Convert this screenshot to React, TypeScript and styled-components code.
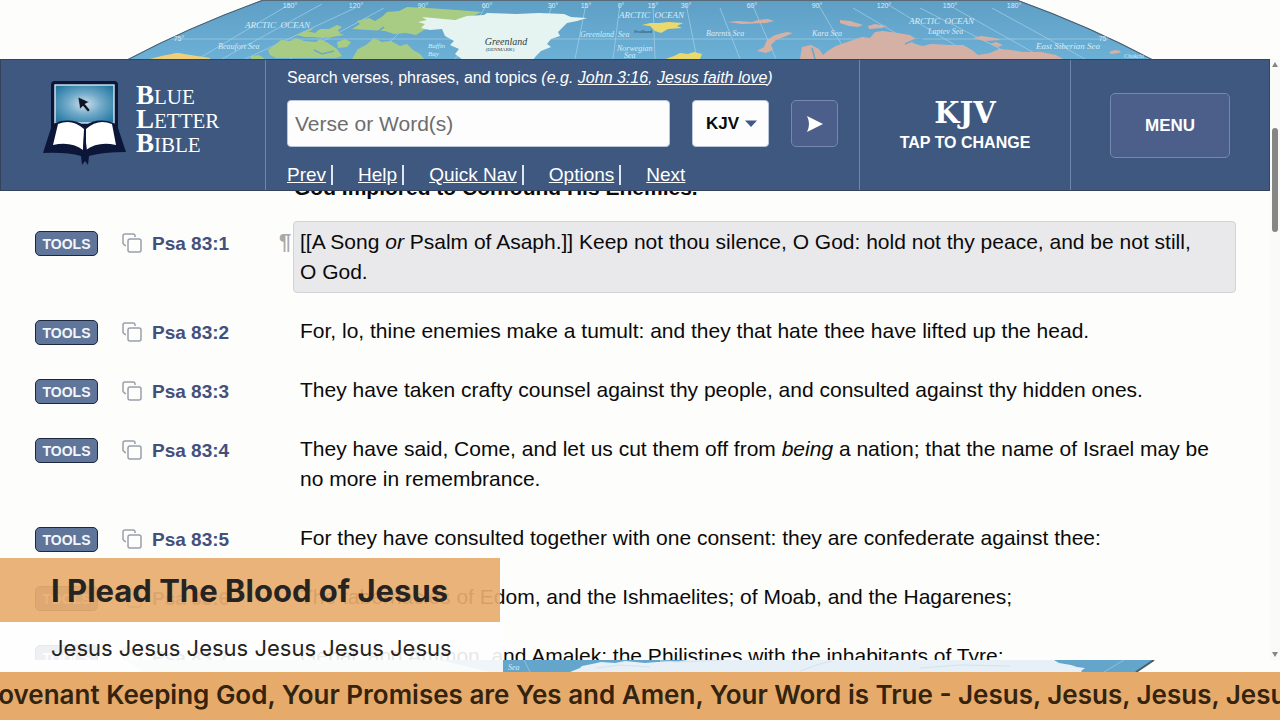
import React from "react";
import styled, { createGlobalStyle } from "styled-components";

const sans = '"Liberation Sans", Arial, sans-serif';
const display = 'Inter, "Open Sans", sans-serif';
const navy = "#3e587f";
const rule = "#6f86ab";

const GlobalStyle = createGlobalStyle`
  *, *::before, *::after { box-sizing: border-box; }
  body { margin: 0; background: #fdfdfb; font-family: ${sans}; color: #0a0a0a; }
`;

const Stage = styled.div`
  position: relative;
  display: flex;
  flex-direction: column;
  height: 100vh;
  overflow: hidden;
`;

const MapStrip = styled.svg<{ $height: number }>`
  display: block;
  flex: none;
  width: 100%;
  height: ${(p) => p.$height}px;
`;

const Browser = styled.div`
  display: flex;
  flex: 1;
  min-height: 0;
`;

const Page = styled.div`
  display: flex;
  flex-direction: column;
  flex: 1;
  min-width: 0;
`;

const Header = styled.header`
  display: grid;
  grid-template-columns: 265px minmax(0, 1fr) 211px 198px;
  flex: none;
  height: 132px;
  background: ${navy};
  border: 1px solid #34425c;
  color: #fff;
`;

const Brand = styled.a`
  display: flex;
  align-items: center;
  gap: 10px;
  padding: 0 0 4px 41px;
  border-right: 1px solid ${rule};
  color: #fff;
  text-decoration: none;
`;

const BrandName = styled.span`
  display: flex;
  flex-direction: column;
  padding-bottom: 4px;
  font: 21px/23px "Liberation Serif", serif;
`;

const Initial = styled.span`
  font-size: 27px;
  font-weight: bold;
  line-height: 20px;
`;

const Search = styled.form`
  display: flex;
  flex-direction: column;
  padding: 8px 21px 0;
  border-right: 1px solid ${rule};
`;

const SearchLabel = styled.label`
  font-size: 16px;
  line-height: 20px;
  a { color: inherit; }
`;

const Fields = styled.div`
  display: flex;
  gap: 22px;
  margin-top: 12px;
`;

const Query = styled.input`
  flex: 1;
  min-width: 0;
  height: 47px;
  padding: 0 7px;
  border: 1px solid #b9c6dc;
  border-radius: 4px;
  background: #fdfdfd;
  font: 21px ${sans};
  &::placeholder { color: #6d6d6d; opacity: 1; }
`;

const Version = styled.div`
  position: relative;
  svg { position: absolute; right: 12px; top: 20px; pointer-events: none; }
`;

const VersionSelect = styled.select`
  width: 77px;
  height: 47px;
  padding: 0 0 0 13px;
  border: 1px solid #b9c6dc;
  border-radius: 4px;
  background: #fdfdfd;
  color: #0a0a0a;
  appearance: none;
  font: bold 17px ${sans};
`;

const SoftButton = styled.button<{ $w: number; $h: number }>`
  display: flex;
  align-items: center;
  justify-content: center;
  width: ${(p) => p.$w}px;
  height: ${(p) => p.$h}px;
  padding: 1px 0 0;
  border: 1px solid #7488b0;
  border-radius: 5px;
  background: #4c5f8a;
  color: #fff;
  font: bold 17px ${sans};
`;

const Links = styled.nav`
  display: flex;
  gap: 25px;
  margin-top: 18px;
  font-size: 19px;
  line-height: 20px;
`;

const LinkItem = styled.span`
  padding-right: 5px;
  border-right: 2px solid #dfe6f2;
  &:last-child { border: 0; }
  a { color: #fff; }
`;

const ChangeVersion = styled.button`
  display: flex;
  flex-direction: column;
  align-items: center;
  justify-content: center;
  padding: 0;
  border: 0;
  border-right: 1px solid ${rule};
  background: none;
  color: #fff;
  font: bold 16px/24px ${sans};
`;

const VersionName = styled.span`
  font: bold 29px/36px "DejaVu Serif", serif;
`;

const MenuCell = styled.div`
  display: flex;
  align-items: center;
  justify-content: center;
`;

const Passage = styled.main`
  flex: 1;
  min-height: 0;
  overflow: hidden;
  padding: 0 34px 0 35px;
`;

const Heading = styled.h2`
  margin: -18px 0 18px 259px;
  font-size: 21px;
  line-height: 30px;
`;

const Verses = styled.ol`
  display: flex;
  flex-direction: column;
  gap: 17px;
  margin: 0;
  padding: 0;
  list-style: none;
`;

const Verse = styled.li`
  display: grid;
  grid-template-columns: 87px 30px 127px 14px minmax(0, 1fr);
  align-items: start;
`;

const Tools = styled.button`
  width: 63px;
  height: 25px;
  margin-top: 10px;
  padding: 0;
  border: 1px solid #1d2840;
  border-radius: 5px;
  background: #5f7599;
  color: #f4f6fa;
  font: bold 14px ${sans};
`;

const Copy = styled.button`
  display: flex;
  width: 20px;
  margin-top: 12px;
  padding: 0;
  border: 0;
  background: none;
`;

const Reference = styled.a`
  margin-top: 10px;
  color: #43507c;
  font-size: 19px;
  font-weight: bold;
  line-height: 26px;
  text-decoration: none;
`;

const Pilcrow = styled.span`
  margin-top: 6px;
  color: #a8a8a8;
  font-size: 22px;
  font-weight: bold;
  line-height: 30px;
`;

const VerseText = styled.p<{ $active?: boolean }>`
  margin: 0;
  padding: 5px 6px;
  border: 1px solid ${(p) => (p.$active ? "#d2d3d6" : "transparent")};
  border-radius: 4px;
  background: ${(p) => (p.$active ? "#e9e9eb" : "transparent")};
  font-size: 21px;
  line-height: 30px;
`;

const Scrollbar = styled.div`
  display: flex;
  flex-direction: column;
  align-items: center;
  width: 10px;
  padding: 3px 0;
  background: #fafaf9;
`;

const Track = styled.div`
  flex: 1;
  width: 6px;
  padding-top: 61px;
`;

const Thumb = styled.div`
  height: 104px;
  border-radius: 3px;
  background: #868686;
`;

const LowerThird = styled.section`
  position: absolute;
  left: 0;
  bottom: 48px;
  font-family: ${display};
  color: #262422;
`;

const Title = styled.h1`
  width: 500px;
  margin: 0;
  padding: 2px 0 0 51px;
  background: rgba(232, 173, 110, 0.92);
  font-size: 31px;
  font-weight: 700;
  line-height: 62px;
  white-space: nowrap;
`;

const Subtitle = styled.p`
  width: 503px;
  margin: 0;
  padding: 2px 0 0 51px;
  background: rgba(254, 254, 254, 0.9);
  font-size: 22px;
  font-weight: 400;
  line-height: 48px;
  white-space: nowrap;
`;

const Ticker = styled.footer`
  flex: none;
  overflow: hidden;
  background: #e6ab6b;
  color: #33230f;
  font: 600 26px/46px ${display};
  height: 48px;
  white-space: nowrap;
`;

const TickerText = styled.p`
  margin: 0 0 0 -21px;
`;

const NorthMap = () => (
  <MapStrip $height={59} viewBox="0 0 1280 59" role="img" aria-label="World map, Arctic">
    <defs>
      <clipPath id="globe">
        <path d="M128 59 Q190 26 262 0 H1018 Q1090 26 1152 59 Z" />
      </clipPath>
      <linearGradient id="sea" x1="0" y1="0" x2="0" y2="1">
        <stop offset="0" stopColor="#5f9fc6" />
        <stop offset="1" stopColor="#6cb0d6" />
      </linearGradient>
    </defs>
    <g clipPath="url(#globe)">
      <rect width="1280" height="59" fill="url(#sea)" />
      <g fill="none" stroke="#9dcbe4" strokeWidth="0.8">
        <path d="M170 39H1110M290 4 198 59M322 4 222 59M355 8 245 59M384 8 290 59M425 8 372 59M487 4 455 59M553 4 530 59M586 4 575 59M620 4 613 59M653 4 655 59M686 4 697 59M720 8 740 59M752 4 776 59M818 4 850 59M853 8 940 59M887 4 978 59M920 8 1020 59M954 8 1045 59M992 8 1085 59" />
      </g>
      <path d="M150 59q14-4 22-5 5-2 12 0l26 4v2z" fill="#f0cf7c" />
      <g fill="#a9cc84">
        <path d="M268 50l8-6 5-4 9 1 6-3 8 3 12 1 4-3 8 4 9 6 5 7-6 2h-60l-6-3z" />
        <path d="M296 35l10-4 9 2 5-4 9 0 8-4 5 2-6 5 8 3-12 2-9 1-10-1-8 0z" />
        <path d="M352 29l8-5-3-3 12-3 6 3 8-5 4-4 12-1 8-4 20 1 30 2 25 2-12 5-22 4-12 6-12 3-8 5-10-2-12 1-9-3z" />
        <path d="M380 21l10-4 9 2 9-3 14 3-10 5-8 2-4 4-10-3-10 1zM352 59l6-10 8-4 8-7 8 4 9-1 9 5 7-2 6 6 7 4 5 6z" />
        <path d="M337 42l8-3 6 3-4 5-9 1zM331 30l6-1 3 4-6 1zM251 56l8-1 6 4h-14zM300 33l10-2 4-3" />
      </g>
      <path d="M455 20l12-4 17-1 3-2 30 1 22-1 25 1 7 3 16 1-10 3-10 2-4 4-5 5 2 4-9 3-4 5 4 3-10 4-5 5-3 4h-70l-8-6 4-5-9-4 4-4-9-5-3-7-12 1-9-2 4-4-7-2 9-2-5-3z" fill="#e5f4f1" />
      <g fill="#ead96d">
        <path d="M642 25l8-2 9 0 10-1 14 1-6 3 5 2-14 1-7 4-6-2-5-5zM666 59l8-3 6-3 8 1 6-2 8 2-2 5z" />
      </g>
      <g fill="#d5b1a5">
        <path d="M757 51l7-4 3-7 8-5 12-3 6 1-7 3-10 4-5 5 2 5-7 3zM728 22l10-1 14 1 6-2 10-1 6 2-8 2-24 1zM840 20l10 1 13 4-5 2-9-1-9-3z" />
        <path d="M800 59l2-12 9-2 8 4 4 6 6-5 7-4 14-5 12-4 8 1 5-6 8-1 15 2 12 2 6 4-5 4 12 3 8-2 20 1 12 0 9 5 6 5 12-2 9-4 12 1 12 2 18 0 15 3 7 4z" />
        <path d="M973 38l8-2 14 2 6 2-17 1zM868 26l7-2 12 2-5 2-13 1zM1109 52l6-2 6 1-2 2-8 1zM990 44l6-2 7 3-5 2z" />
      </g>
      <g fill="none" stroke="#6ca8c8" strokeWidth="1.6">
        <path d="M815 59l-3-11M905 44l9-4 9-1M350 40l10 8M362 34l14-1 8-6M314 50l8 4 12-3M500 59" />
      </g>
      <path d="M128 59 Q190 26 262 0M1018 0 Q1090 26 1152 59" fill="none" stroke="#4b5c69" strokeWidth="2" />
      <path d="M262 0.500H1018" stroke="#566a78" />
      <g fill="#d9ebf6" fontFamily="Liberation Serif, serif" fontStyle="italic" fontSize="8">
        <text x="245" y="28" fontSize="9">ARCTIC&#160; OCEAN</text>
        <text x="619" y="18" fontSize="9">ARCTIC&#160; OCEAN</text>
        <text x="909" y="24" fontSize="9">ARCTIC&#160; OCEAN</text>
        <text x="218" y="49">Beaufort Sea</text>
        <text x="580" y="37">Greenland&#160; Sea</text>
        <text x="617" y="51">Norwegian</text>
        <text x="624" y="58">Sea</text>
        <text x="706" y="36">Barents Sea</text>
        <text x="812" y="36">Kara Sea</text>
        <text x="928" y="34">Laptev Sea</text>
        <text x="1036" y="49" fontSize="9">East Siberian Sea</text>
        <text x="428" y="48" fontSize="7">Baffin</text>
        <text x="428" y="56" fontSize="7">Bay</text>
        <text x="1124" y="58" fontSize="6">Chukchi</text>
      </g>
      <g fill="#303c3c" fontFamily="Liberation Serif, serif" textAnchor="middle">
        <text x="506" y="45" fontSize="10" fontStyle="italic">Greenland</text>
        <text x="500" y="51" fontSize="5">(DENMARK)</text>
        <text x="643" y="33" fontSize="5">Svalbard</text>
      </g>
      <g fill="#d9ebf6" fontFamily="Liberation Sans, sans-serif" fontSize="7" textAnchor="middle">
        {[
          [290, "150°"], [356, "120°"], [423, "90°"], [487, "60°"], [553, "30°"], [586, "15°"],
          [621, "0°"], [653, "15°"], [686, "30°"], [752, "60°"], [817, "90°"], [884, "120°"],
          [950, "150°"], [1014, "180°"],
        ].map(([x, label]) => (
          <text key={x} x={x} y="8">{label}</text>
        ))}
        <text x="179" y="41">75°</text>
        <text x="1104" y="41">75°</text>
      </g>
    </g>
  </MapStrip>
);

const SouthMap = () => (
  <MapStrip $height={12} viewBox="0 0 1280 12" role="img" aria-label="World map, Antarctic">
    <path d="M126 0H1154L1136 12H144Z" fill="#64a5cb" />
    <path d="M144 12L126 0H440L490 12z" fill="#cfe3ec" />
    <path d="M570 12l10-4 2-2 10-2 9-2 14 1 10-2 20 2 12-1 18 0 12-2H1054l5 3 12 2 6 2 8 1-4 3 2 2z" fill="#e7f0f6" />
    <path d="M660 1l20 1 44-2M596 8l24-3 30 2M800 11l20-7 12-3M920 8l40-3 50 1" stroke="#d3e3ed" fill="none" />
    <path d="M524 0l6 12M1124 0l-20 12" stroke="#8fc0db" />
    <path d="M1154 0l-18 12" stroke="#4b5c69" strokeWidth="2" />
    <text x="508" y="10" fontSize="8" fontStyle="italic" fontFamily="Liberation Serif, serif" fill="#d9ebf6">Sea</text>
  </MapStrip>
);

const Logo = () => (
  <svg width="84" height="86" viewBox="0 0 84 86" aria-hidden="true">
    <defs>
      <radialGradient id="glow" cx="0.5" cy="0.5" r="0.65">
        <stop offset="0" stopColor="#cfe2ee" />
        <stop offset="0.45" stopColor="#6fa9c8" />
        <stop offset="1" stopColor="#1f75a0" />
      </radialGradient>
    </defs>
    <rect x="9" y="1" width="67" height="50" rx="4" fill="#0c1638" />
    <rect x="13" y="5" width="59" height="38" fill="url(#glow)" stroke="#d5e8f2" strokeWidth="1.400" />
    <path d="M9 48L1 73q24-1 38 3l1 9 3-4 3 4 1-9q14-4 37-4L76 48l-4-5q-17-6-29 3-14-9-30-3z" fill="#0c1638" />
    <path d="M16 44q14-6 26 5l-1 21q-12-9-30-5zM70 44q-14-6-26 5l0 21q12-9 30-5z" fill="#fff" />
    <path d="M42.500 49L41 71h4z" fill="#0c1638" />
    <path d="M36 17l2 12 3-3 5 6 2-2-5-6 4-2z" fill="#0d1428" stroke="#b9d2e2" strokeWidth="0.500" />
  </svg>
);

const CopyIcon = () => (
  <svg width="20" height="20" viewBox="0 0 20 20" fill="none" stroke="#9a9fac" strokeWidth="1.500" aria-hidden="true">
    <path d="M4 12.500H3L1 10.500V3q0-2 2-2h8q2 0 2 2v1" />
    <rect x="6" y="6" width="13" height="13" rx="2" />
  </svg>
);

const verses: { n: number; text: React.ReactNode; active?: boolean }[] = [
  {
    n: 1,
    active: true,
    text: (
      <>[[A Song <em>or</em> Psalm of Asaph.]] Keep not thou silence, O God: hold not thy peace, and be not still, O&nbsp;God.</>
    ),
  },
  { n: 2, text: "For, lo, thine enemies make a tumult: and they that hate thee have lifted up the head." },
  { n: 3, text: "They have taken crafty counsel against thy people, and consulted against thy hidden ones." },
  {
    n: 4,
    text: (
      <>They have said, Come, and let us cut them off from <em>being</em> a nation; that the name of Israel may be no more in remembrance.</>
    ),
  },
  { n: 5, text: "For they have consulted together with one consent: they are confederate against thee:" },
  { n: 6, text: "The tabernacles of Edom, and the Ishmaelites; of Moab, and the Hagarenes;" },
  { n: 7, text: "Gebal, and Ammon, and Amalek; the Philistines with the inhabitants of Tyre;" },
];

export default function App() {
  return (
    <>
      <GlobalStyle />
      <Stage>
        <NorthMap />
        <Browser>
          <Page>
            <Header>
              <Brand href="#home">
                <Logo />
                <BrandName>
                  <span><Initial>B</Initial>LUE</span>
                  <span><Initial>L</Initial>ETTER</span>
                  <span><Initial>B</Initial>IBLE</span>
                </BrandName>
              </Brand>
              <Search onSubmit={(e) => e.preventDefault()}>
                <SearchLabel htmlFor="query">
                  Search verses, phrases, and topics{" "}
                  <em>(e.g. <a href="#john">John 3:16</a>, <a href="#faith">Jesus faith love</a>)</em>
                </SearchLabel>
                <Fields>
                  <Query id="query" type="text" placeholder="Verse or Word(s)" />
                  <Version>
                    <VersionSelect aria-label="Version" defaultValue="KJV">
                      <option>KJV</option>
                      <option>NKJV</option>
                      <option>ESV</option>
                    </VersionSelect>
                    <svg width="12" height="7" viewBox="0 0 12 7" aria-hidden="true">
                      <path d="M0 0.500h12L6 7z" fill="#43578c" />
                    </svg>
                  </Version>
                  <SoftButton type="submit" aria-label="Search" $w={47} $h={47}>
                    <svg width="17" height="18" viewBox="0 0 17 18" aria-hidden="true">
                      <path d="M1 1L17 9 1 17q4-8 0-16z" fill="#fff" />
                    </svg>
                  </SoftButton>
                </Fields>
                <Links>
                  {["Prev", "Help", "Quick Nav", "Options", "Next"].map((l) => (
                    <LinkItem key={l}><a href={`#${l}`}>{l}</a></LinkItem>
                  ))}
                </Links>
              </Search>
              <ChangeVersion type="button">
                <VersionName>KJV</VersionName>
                TAP TO CHANGE
              </ChangeVersion>
              <MenuCell>
                <SoftButton type="button" $w={120} $h={65}>MENU</SoftButton>
              </MenuCell>
            </Header>
            <Passage>
              <Heading>God Implored to Confound His Enemies.</Heading>
              <Verses>
                {verses.map((v) => (
                  <Verse key={v.n}>
                    <Tools type="button">TOOLS</Tools>
                    <Copy type="button" aria-label={`Copy Psalm 83:${v.n}`}><CopyIcon /></Copy>
                    <Reference href={`#v${v.n}`}>Psa 83:{v.n}</Reference>
                    <Pilcrow>{v.active ? "¶" : ""}</Pilcrow>
                    <VerseText $active={v.active}>{v.text}</VerseText>
                  </Verse>
                ))}
              </Verses>
            </Passage>
          </Page>
          <Scrollbar aria-hidden="true">
            <svg width="6" height="5" viewBox="0 0 6 5"><path d="M0 5L3 0l3 5z" fill="#868686" /></svg>
            <Track><Thumb /></Track>
            <svg width="6" height="5" viewBox="0 0 6 5"><path d="M0 0h6L3 5z" fill="#868686" /></svg>
          </Scrollbar>
        </Browser>
        <SouthMap />
        <LowerThird>
          <Title>I Plead The Blood of Jesus</Title>
          <Subtitle>Jesus Jesus Jesus Jesus Jesus Jesus</Subtitle>
        </LowerThird>
        <Ticker>
          <TickerText>
            Covenant Keeping God, Your Promises are Yes and Amen, Your Word is True - Jesus, Jesus, Jesus, Jesus
          </TickerText>
        </Ticker>
      </Stage>
    </>
  );
}
